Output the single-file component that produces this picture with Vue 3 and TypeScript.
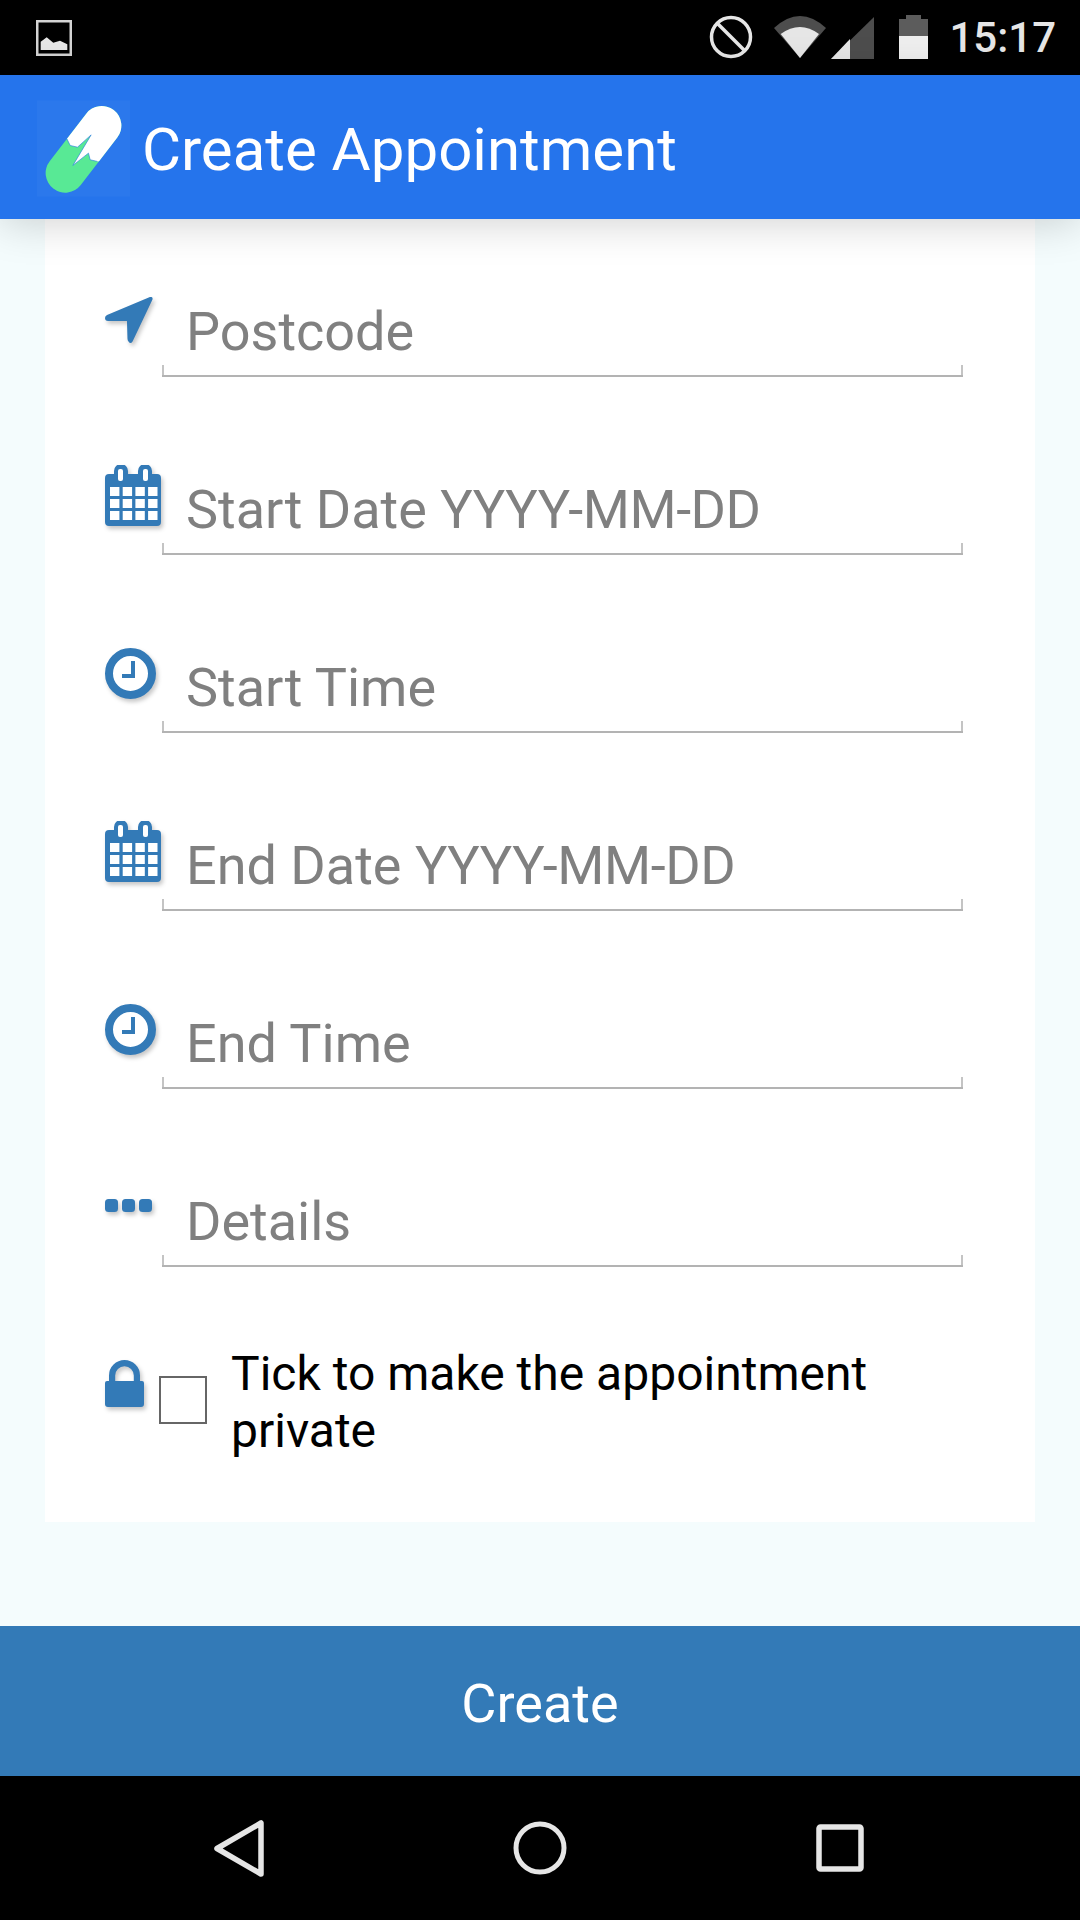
<script setup lang="ts">
type FieldIcon = 'location' | 'calendar' | 'clock' | 'dots'

const fields: { icon: FieldIcon; label: string; hint?: string }[] = [
  { icon: 'location', label: 'Postcode' },
  { icon: 'calendar', label: 'Start Date', hint: 'YYYY-MM-DD' },
  { icon: 'clock', label: 'Start Time' },
  { icon: 'calendar', label: 'End Date', hint: 'YYYY-MM-DD' },
  { icon: 'clock', label: 'End Time' },
  { icon: 'dots', label: 'Details' }
]

const calendarCells: { x: number; y: number }[] = []
for (let row = 0; row < 3; row++) {
  for (let col = 0; col < 4; col++) {
    calendarCells.push({ x: 5 + col * 12.7, y: 22 + row * 12 })
  }
}
</script>

<template>
  <div class="phone">
    <!-- status bar -->
    <header class="status">
      <svg class="st-image" width="36" height="36" viewBox="0 0 36 36">
        <rect x="1.250" y="1.250" width="33.500" height="33.500" fill="none" stroke="#d4d4d4" stroke-width="2.500" />
        <path d="M4.700 30V21.700L10.700 17.300L17.300 22.700L24 20.700L31.300 24.300V30Z" fill="#e6e6e6" />
      </svg>
      <span class="st-spacer"></span>
      <svg class="st-block" width="44" height="44" viewBox="0 0 44 44">
        <circle cx="22" cy="22" r="19.500" fill="none" stroke="#e6e6e6" stroke-width="3.500" />
        <path d="M8.500 8.500L35.500 35.500" stroke="#e6e6e6" stroke-width="3.500" />
      </svg>
      <svg class="st-wifi" width="54" height="44" viewBox="0 0 54 44">
        <path d="M1 12Q27 -12 53 12L27 42Z" fill="#4d4d4d" />
        <path d="M7.700 18Q27 4 46 18L27 42Z" fill="#e6e6e6" />
      </svg>
      <svg class="st-signal" width="43" height="42" viewBox="0 0 43 42">
        <path d="M43 0V42H0Z" fill="#4d4d4d" />
        <path d="M0 42L19 22V42Z" fill="#e6e6e6" />
      </svg>
      <svg class="st-battery" width="29" height="44" viewBox="0 0 29 44">
        <path d="M7 0H22V4H29V21H0V4H7Z" fill="#5c5c5c" />
        <rect x="0" y="21" width="29" height="23" fill="#eeeeee" />
      </svg>
      <span class="st-time">15:17</span>
    </header>

    <!-- app bar -->
    <div class="appbar">
      <svg class="logo" width="93" height="97" viewBox="110 296 280 290">
        <defs>
          <clipPath id="pill-top">
            <path d="M100 290H400V470L292 480L270 475L265 455L218 492L273 400L232 437L210 432L200 412L100 400Z" />
          </clipPath>
        </defs>
        <rect x="110" y="296" width="280" height="290" fill="#2b78ec" />
        <path d="M305 372L195 515" stroke="#58e995" stroke-width="118" stroke-linecap="round" />
        <path d="M305 372L195 515" stroke="#ffffff" stroke-width="118" stroke-linecap="round" clip-path="url(#pill-top)" />
        <path d="M200 412L210 432L232 437L273 400L218 492L265 455L270 475L292 480" fill="none" stroke="#2f80e0" stroke-width="2" />
      </svg>
      <h1 class="title">Create Appointment</h1>
    </div>

    <main class="content">
      <section class="card">
        <div v-for="field in fields" :key="field.label" class="row">
          <div class="icon-col">
            <svg v-if="field.icon === 'location'" class="icon ic-location" width="48" height="50" viewBox="0 0 47 48">
              <path d="M45 1.500Q47 1 46.500 4L27 45Q25 48 23 45Q22 44 22 42L21.500 25H3Q0 25 0 22Q0 20 2 19L44 1.500Z" fill="#337ab7" />
            </svg>
            <svg v-else-if="field.icon === 'calendar'" class="icon ic-calendar" width="56" height="61" viewBox="0 0 56 61">
              <path d="M4 9H9V6A7 7 0 0 1 23 6V9H33V6A7 7 0 0 1 47 6V9H52A4 4 0 0 1 56 13V57A4 4 0 0 1 52 61H4A4 4 0 0 1 0 57V13A4 4 0 0 1 4 9Z" fill="#337ab7" />
              <rect x="13" y="4" width="5" height="12" rx="2" fill="#fff" />
              <rect x="38" y="4" width="5" height="12" rx="2" fill="#fff" />
              <rect v-for="(c, i) in calendarCells" :key="i" :x="c.x" :y="c.y" width="9.400" height="9" fill="#fff" />
            </svg>
            <svg v-else-if="field.icon === 'clock'" class="icon ic-clock" width="51" height="51" viewBox="0 0 51 51">
              <circle cx="25.500" cy="25.500" r="21.500" fill="#fff" stroke="#337ab7" stroke-width="8" />
              <path d="M28 13V28H17" fill="none" stroke="#337ab7" stroke-width="4" />
            </svg>
            <svg v-else class="icon ic-dots" width="47" height="13" viewBox="0 0 47 13">
              <rect x="0" y="0" width="13" height="13" rx="3.500" fill="#337ab7" />
              <rect x="17" y="0" width="13" height="13" rx="3.500" fill="#337ab7" />
              <rect x="34" y="0" width="13" height="13" rx="3.500" fill="#337ab7" />
            </svg>
          </div>
          <div class="field">
            <span class="placeholder">{{ field.label }} <span v-if="field.hint" class="hint">{{ field.hint }}</span></span>
          </div>
        </div>

        <div class="private">
          <svg class="icon ic-lock" width="39" height="47" viewBox="0 0 39 47">
            <path d="M4 21V15.500A15.500 15.500 0 0 1 35 15.500V21H37A2 2 0 0 1 39 23V44A3 3 0 0 1 36 47H3A3 3 0 0 1 0 44V23A2 2 0 0 1 2 21ZM10.200 15.500V21H28.800V15.500A9.300 9.300 0 0 0 10.200 15.500Z" fill="#337ab7" fill-rule="evenodd" />
          </svg>
          <span class="checkbox"></span>
          <p class="private-text">Tick to make the appointment private</p>
        </div>
      </section>
    </main>

    <button class="create">Create</button>

    <!-- nav bar -->
    <footer class="nav">
      <svg width="50" height="57" viewBox="0 0 50 57">
        <path d="M47 3V54L3 28.500Z" fill="none" stroke="#e6e6e6" stroke-width="5.500" stroke-linejoin="round" />
      </svg>
      <svg width="54" height="54" viewBox="0 0 54 54">
        <circle cx="27" cy="27" r="24" fill="none" stroke="#e6e6e6" stroke-width="5" />
      </svg>
      <svg width="48" height="48" viewBox="0 0 48 48">
        <rect x="3" y="3" width="42" height="42" rx="1.500" fill="none" stroke="#e6e6e6" stroke-width="5.500" />
      </svg>
    </footer>
  </div>
</template>

<style scoped>
.phone {
  width: 1080px;
  height: 1920px;
  display: flex;
  flex-direction: column;
  overflow: hidden;
  font-family: Roboto, "Liberation Sans", sans-serif;
  background: #f4fcfd;
}

.status {
  height: 75px;
  flex: none;
  background: #000;
  display: flex;
  align-items: flex-start;
  padding-left: 36px;
}

.st-image { margin-top: 20px; }
.st-spacer { flex: 1; }
.st-block { margin-top: 15px; }
.st-wifi { margin-top: 16px; margin-left: 20px; }
.st-signal { margin-top: 17px; margin-left: 4px; }
.st-battery { margin-top: 15px; margin-left: 25px; }

.st-time {
  margin-left: 21px;
  margin-right: 24px;
  font-size: 42px;
  font-weight: 500;
  line-height: 75px;
  color: #e6e6e6;
}

.appbar {
  position: relative;
  z-index: 2;
  height: 144px;
  flex: none;
  background: #2574ec;
  display: flex;
  align-items: center;
  padding-left: 37px;
  box-shadow: 0 4px 40px rgba(0, 0, 0, 0.18);
}

.logo { margin-top: 2px; }

.title {
  margin: 4px 0 0 12px;
  font-size: 60px;
  font-weight: 400;
  color: #fff;
}

.content {
  flex: 1;
  padding: 0 45px;
}

.card {
  height: 1303px;
  box-sizing: border-box;
  background: #fff;
  padding: 42px 72px 0 60px;
}

.row {
  display: flex;
  height: 116px;
  margin-bottom: 62px;
}

.icon-col {
  width: 57px;
  flex: none;
}

.icon {
  display: block;
  filter: drop-shadow(2px 3px 2px rgba(0, 0, 0, 0.22));
}

.ic-location { margin-top: 34px; }
.ic-calendar { margin-top: 26px; }
.ic-clock { margin-top: 31px; }
.ic-dots { margin-top: 48px; }

.field {
  flex: 1;
  position: relative;
  border-bottom: 2px solid #b3b3b3;
  padding-left: 24px;
}

.field::before,
.field::after {
  content: "";
  position: absolute;
  bottom: 0;
  width: 2px;
  height: 10px;
  background: #c4c4c4;
}

.field::before { left: 0; }
.field::after { right: 0; }

.placeholder {
  display: block;
  margin-top: 39px;
  font-size: 54px;
  line-height: 64px;
  color: #808080;
}

.hint { letter-spacing: -0.45px; }

.private {
  display: flex;
  align-items: flex-start;
  margin-top: 50px;
}

.ic-lock { margin-top: 31px; flex: none; }

.checkbox {
  flex: none;
  box-sizing: border-box;
  width: 48px;
  height: 48px;
  margin: 47px 0 0 15px;
  border: 2px solid #666;
  background: #fff;
}

.private-text {
  margin: 16px 0 0 24px;
  width: 700px;
  font-size: 48px;
  line-height: 57px;
  color: #000;
}

.create {
  height: 150px;
  flex: none;
  border: 0;
  padding: 4px 0 0;
  background: #337ab7;
  color: #fff;
  font-family: inherit;
  font-size: 54px;
}

.nav {
  height: 144px;
  flex: none;
  background: #000;
  display: grid;
  grid-template-columns: 240px 1fr 1fr 240px;
  align-items: center;
  position: relative;
}

.nav svg:nth-child(1) { grid-column: 1; justify-self: end; margin-right: -24px; }
.nav svg:nth-child(2) { grid-column: 2 / 4; justify-self: center; }
.nav svg:nth-child(3) { grid-column: 4; justify-self: start; margin-left: -24px; }
</style>
